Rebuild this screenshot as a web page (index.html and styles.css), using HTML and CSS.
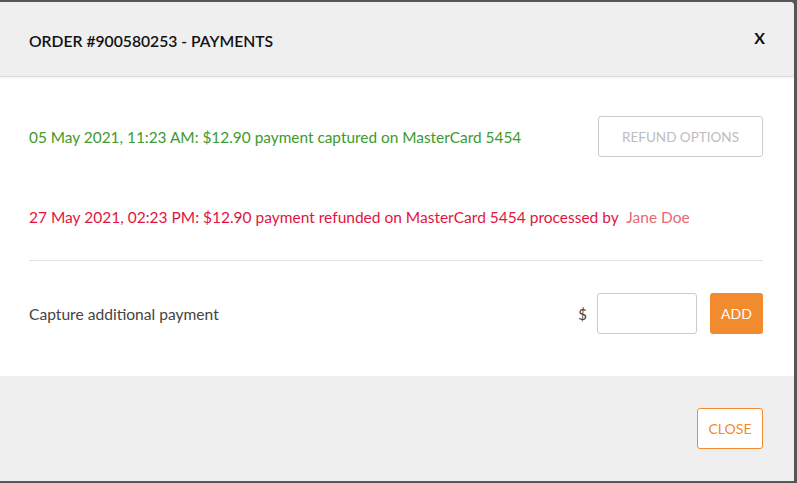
FILE: index.html
```html
<!DOCTYPE html>
<html>
<head>
<meta charset="utf-8">
<link rel="stylesheet" href="styles.css">
</head>
<body>
<div class="modal">
  <div class="modal-header">
    <h1 class="title">ORDER #900580253 - PAYMENTS</h1>
    <button class="close-x" aria-label="Close">X</button>
  </div>
  <div class="modal-body">
    <div class="row row-first">
      <span class="captured">05 May 2021, 11:23 AM: $12.90 payment captured on MasterCard 5454</span>
      <button class="btn-outline">REFUND OPTIONS</button>
    </div>
    <div class="row row-second">
      <span class="refunded">27 May 2021, 02:23 PM: $12.90 payment refunded on MasterCard 5454 processed by <span class="user">Jane Doe</span></span>
    </div>
    <hr class="divider">
    <div class="row row-capture">
      <span class="label">Capture additional payment</span>
      <div class="amount">
        <span class="currency">$</span>
        <input class="amount-input" type="text">
        <button class="btn-add">ADD</button>
      </div>
    </div>
  </div>
  <div class="modal-footer">
    <button class="btn-close">CLOSE</button>
  </div>
</div>
</body>
</html>
```
FILE: styles.css
```css
html, body {
  margin: 0;
  padding: 0;
}
body {
  background: #565656;
  width: 797px;
  height: 483px;
  overflow: hidden;
  font-family: Lato, "Open Sans", sans-serif;
}
.modal {
  margin-top: 2px;
  width: 794px;
  height: 479px;
  background: #fff;
  border-top-right-radius: 4px;
  overflow: hidden;
  display: flex;
  flex-direction: column;
}
.modal-header {
  height: 75px;
  flex-shrink: 0;
  background: #efefef;
  border-bottom: 1px solid #dedede;
  box-shadow: 0 1px 2px rgba(0,0,0,0.06);
  display: flex;
  align-items: center;
  justify-content: space-between;
  padding: 0 29px 0 29px;
  box-sizing: border-box;
}
.title {
  margin: 0;
  font-size: 15.7px;
  font-weight: 600;
  color: #111;
  position: relative;
  top: 2px;
}
.close-x {
  background: none;
  border: none;
  padding: 0;
  font-family: inherit;
  font-size: 16px;
  font-weight: 700;
  color: #111;
  margin-right: 0;
  position: relative;
  top: -2px;
}
.modal-body {
  height: 299px;
  flex-shrink: 0;
  box-sizing: border-box;
  padding: 39px 31px 0 29px;
}
.row {
  display: flex;
  align-items: center;
  justify-content: space-between;
  height: 41px;
}
.row-second {
  margin-top: 39px;
}
.captured {
  color: #3d9a2c;
  font-size: 15.4px;
}
.refunded {
  color: #e2143d;
  font-size: 15.5px;
}
.user {
  color: #ea6872;
  margin-left: 4px;
}
.btn-outline {
  width: 165px;
  height: 41px;
  background: #fff;
  border: 1px solid #cccccc;
  border-radius: 3px;
  color: #bcbcbc;
  font-family: inherit;
  font-size: 13.5px;
}
.divider {
  margin: 23px 0 0 0;
  border: none;
  border-top: 1px solid #e2e2e2;
  height: 0;
}
.row-capture {
  margin-top: 32px;
}
.label {
  color: #444;
  font-size: 15.6px;
}
.amount {
  display: flex;
  align-items: center;
}
.currency {
  color: #444;
  font-size: 15px;
  margin-right: 10px;
}
.amount-input {
  width: 100px;
  height: 41px;
  box-sizing: border-box;
  border: 1px solid #cccccc;
  border-radius: 3px;
  margin: 0 13px 0 0;
  padding: 0 8px;
}
.btn-add {
  width: 53px;
  height: 41px;
  background: #f28a2e;
  border: none;
  border-radius: 3px;
  color: #fff;
  font-family: inherit;
  font-size: 14px;
}
.modal-footer {
  flex: 1;
  background: #efefef;
  display: flex;
  justify-content: flex-end;
  align-items: flex-start;
  padding: 32px 31px 0 0;
}
.btn-close {
  width: 66px;
  height: 41px;
  background: #fff;
  border: 1px solid #f28a2e;
  border-radius: 3px;
  color: #f28a2e;
  font-family: inherit;
  font-size: 14px;
}
```
